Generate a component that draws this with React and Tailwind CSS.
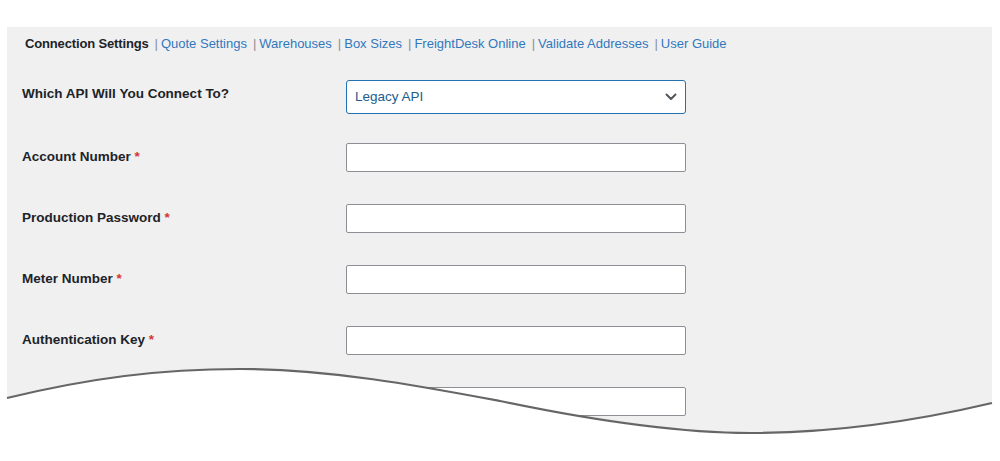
import React from "react";

const tabs = [
  "Quote Settings",
  "Warehouses",
  "Box Sizes",
  "FreightDesk Online",
  "Validate Addresses",
  "User Guide",
];

const fields = [
  "Account Number",
  "Production Password",
  "Meter Number",
  "Authentication Key",
  "Secret Key",
];

function Wave() {
  // torn-page edge drawn over the bottom of the panel
  const curve =
    "M7 398 C90 378, 160 369, 240 369 C330 369, 420 386, 500 401 C600 422, 680 433, 750 433 C840 433, 920 420, 992 403";
  return (
    <svg
      className="absolute inset-0 w-[1000px] h-[461px] pointer-events-none"
      viewBox="0 0 1000 461"
    >
      <path d={curve + " L1000 403 L1000 461 L0 461 L0 398 Z"} fill="#ffffff" />
      <path d={curve} fill="none" stroke="#666666" strokeWidth="2.2" />
    </svg>
  );
}

export default function App() {
  return (
    <div
      className="relative w-[1000px] h-[461px] overflow-hidden bg-white"
      style={{ fontFamily: '"Liberation Sans", Arial, sans-serif' }}
    >
      <div className="ml-[7px] mr-[8px] mt-[27px] h-[434px] bg-[#f0f0f1] pt-[8px]">
        {/* Tabs */}
        <div className="flex items-center h-[18px] pl-[18px] text-[13px] leading-[18px]">
          <span className="font-bold text-[#1d2327] tracking-[-0.15px]">Connection Settings</span>
          {tabs.map((t) => (
            <React.Fragment key={t}>
              <span className="ml-[6px] mr-[3px] text-[#8c8f94]">|</span>
              <span className="text-[#3278bd]">{t}</span>
            </React.Fragment>
          ))}
        </div>

        <div className="mt-[13px] pl-[15px]">
          {/* API select */}
          <div className="flex items-center h-[61px]">
            <div className="w-[324px] pb-[4px] text-[13.5px] font-bold text-[#1d2327]">
              Which API Will You Connect To?
            </div>
            <div className="flex items-center justify-between w-[340px] h-[34px] border-[1.5px] border-[#2271b1] rounded-[3px] bg-white pl-[8px] pr-[8px]">
              <span className="pt-[1px] text-[13.5px] text-[#215b8e]">Legacy API</span>
              <svg width="12" height="8" viewBox="0 0 12 8">
                <polyline
                  points="1.5,1.5 6,6 10.5,1.5"
                  fill="none"
                  stroke="#50575e"
                  strokeWidth="2"
                  strokeLinecap="round"
                  strokeLinejoin="round"
                />
              </svg>
            </div>
          </div>

          {/* Text inputs */}
          {fields.map((f) => (
            <div key={f} className="flex items-center h-[61px]">
              <div className="w-[324px] text-[13.5px] font-bold text-[#1d2327]">
                {f} <span className="text-[#d63638]">*</span>
              </div>
              <div className="w-[340px] h-[29px] border border-[#8c8f94] rounded-[2px] bg-white" />
            </div>
          ))}
        </div>
      </div>
      <Wave />
    </div>
  );
}
